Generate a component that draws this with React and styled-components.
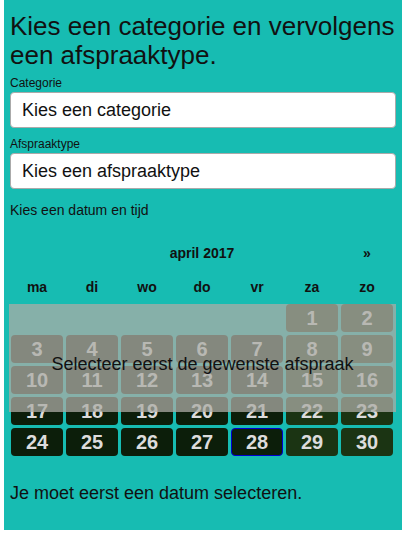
import React from 'react';
import styled, { createGlobalStyle } from 'styled-components';

const GlobalStyle = createGlobalStyle`
  body {
    margin: 0;
    background: #fff;
    font-family: "Liberation Sans", Arial, sans-serif;
  }
`;

const Page = styled.div`
  margin: 0 4px;
  min-height: 530px;
  padding: 0 6px;
  background: #17bcb2;
  color: #111;
  box-sizing: border-box;
  overflow: hidden;
`;

const Title = styled.h1`
  margin: 12px 0 0;
  font-size: 26px;
  line-height: 29px;
  font-weight: normal;
`;

const Label = styled.label`
  display: block;
  margin-top: ${(p) => p.$top}px;
  font-size: 12px;
  line-height: 14px;
`;

const Select = styled.div`
  margin-top: 2px;
  height: 36px;
  box-sizing: border-box;
  padding: 0 11px;
  display: flex;
  align-items: center;
  background: #fff;
  border: 1px solid #aaa;
  border-radius: 4px;
  font-size: 18px;
`;

const Hint = styled.p`
  margin: 13px 0 0;
  font-size: 14px;
  line-height: 16px;
`;

const Calendar = styled.div`
  margin-top: 18px;
`;

const HeadRow = styled.div`
  display: grid;
  grid-template-columns: repeat(7, 52px);
  column-gap: 3px;
  padding: 0 3px 0 1px;
  font-size: 14px;
  font-weight: bold;
  line-height: 34px;
  text-align: center;
`;

const MonthTitle = styled.div`
  grid-column: 2 / span 5;
`;

const Body = styled.div`
  position: relative;
`;

const Days = styled.div`
  display: grid;
  grid-template-columns: repeat(7, 52px);
  grid-auto-rows: 28px;
  gap: 3px;
  padding: 0 3px 0 1px;
`;

const Day = styled.div`
  display: flex;
  align-items: center;
  justify-content: center;
  border-radius: 4px;
  box-sizing: border-box;
  background: ${(p) => (p.$weekend ? '#1b3413' : '#0c1e0a')};
  border: 1px solid ${(p) => (p.$today ? '#0000d0' : 'transparent')};
  color: #dcdcdc;
  font-size: 20px;
  font-weight: bold;
`;

const Overlay = styled.div`
  position: absolute;
  top: 0;
  left: -1px;
  right: 0;
  height: 108px;
  padding-top: 50px;
  box-sizing: border-box;
  background: rgba(172, 172, 166, 0.75);
  text-align: center;
  font-size: 18px;
  line-height: 21px;
  color: #111;
`;

const Message = styled.p`
  margin: 27px 0 0;
  font-size: 18px;
  line-height: 21px;
`;

const weekdays = ['ma', 'di', 'wo', 'do', 'vr', 'za', 'zo'];

const App = () => {
  const cells = [];
  for (let i = 0; i < 5; i++) cells.push(null);
  for (let d = 1; d <= 30; d++) cells.push(d);

  return (
    <>
      <GlobalStyle />
      <Page>
        <Title>Kies een categorie en vervolgens een afspraaktype.</Title>
        <Label $top={6}>Categorie</Label>
        <Select>Kies een categorie</Select>
        <Label $top={9}>Afspraaktype</Label>
        <Select>Kies een afspraaktype</Select>
        <Hint>Kies een datum en tijd</Hint>
        <Calendar>
          <HeadRow>
            <MonthTitle>april 2017</MonthTitle>
            <div>»</div>
          </HeadRow>
          <HeadRow>
            {weekdays.map((w) => (
              <div key={w}>{w}</div>
            ))}
          </HeadRow>
          <Body>
            <Days>
              {cells.map((d, i) =>
                d === null ? (
                  <div key={'e' + i} />
                ) : (
                  <Day key={d} $weekend={i % 7 >= 5} $today={d === 28}>
                    {d}
                  </Day>
                )
              )}
            </Days>
            <Overlay>Selecteer eerst de gewenste afspraak</Overlay>
          </Body>
        </Calendar>
        <Message>Je moet eerst een datum selecteren.</Message>
      </Page>
    </>
  );
};

export default App;
